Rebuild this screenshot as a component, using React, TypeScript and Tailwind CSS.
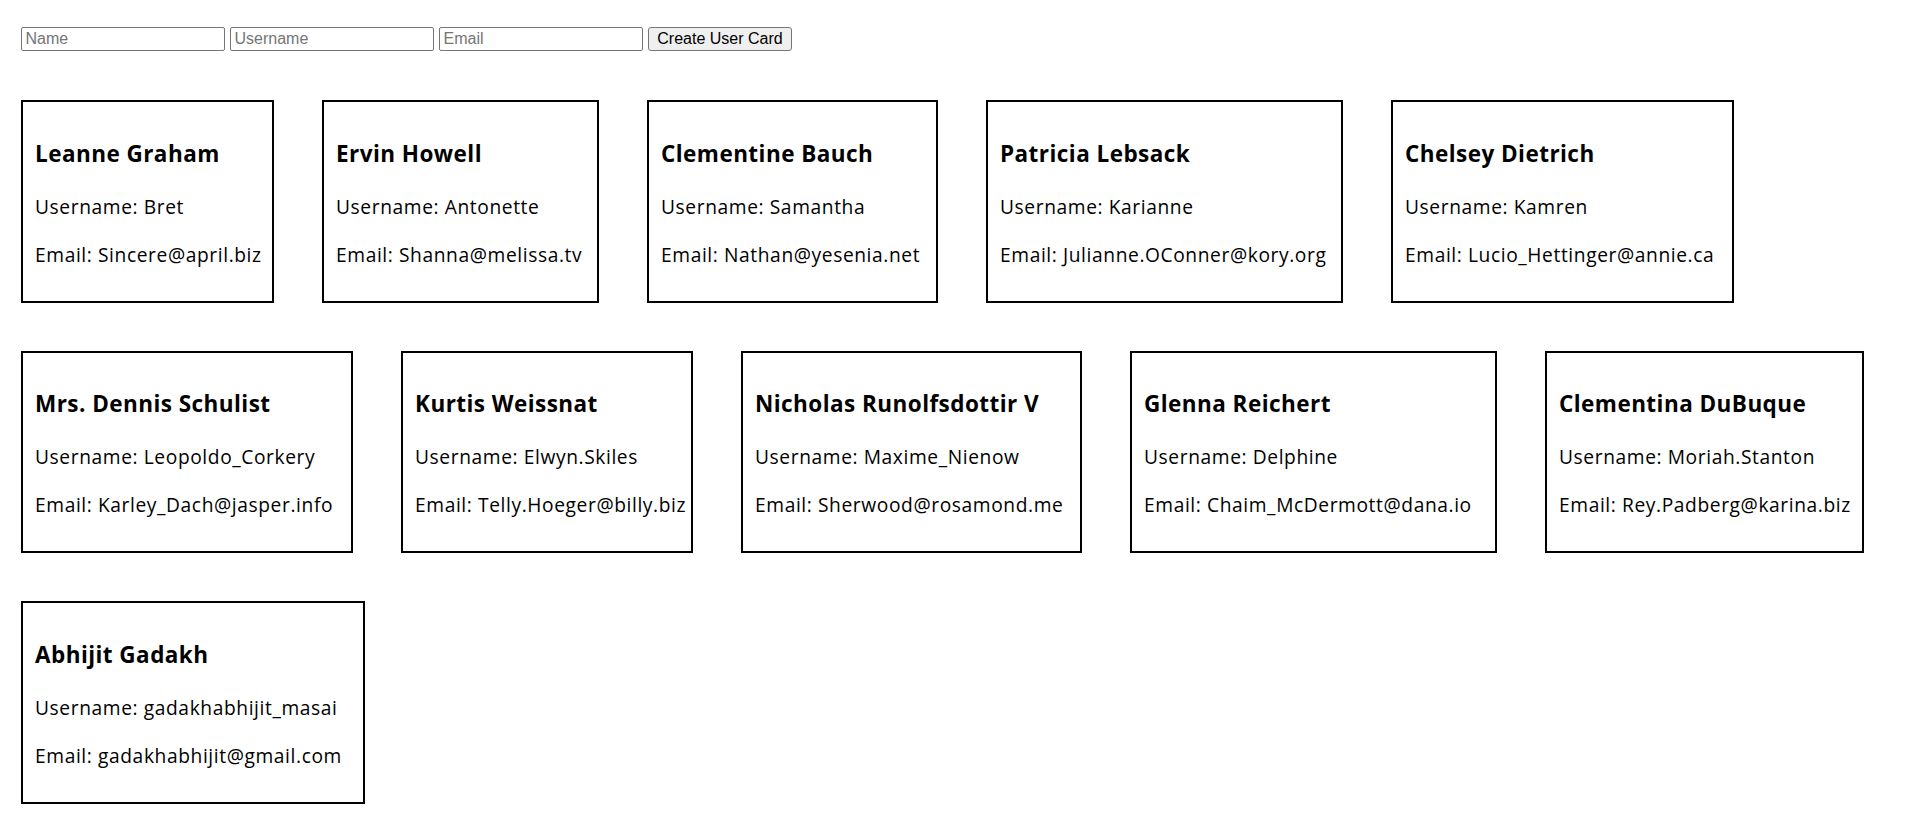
import { useState } from "react";

type User = {
  name: string;
  username: string;
  email: string;
  width: string;
};

const initialUsers: User[] = [
  { name: "Leanne Graham", username: "Bret", email: "Sincere@april.biz", width: "w-[253px]" },
  { name: "Ervin Howell", username: "Antonette", email: "Shanna@melissa.tv", width: "w-[277px]" },
  { name: "Clementine Bauch", username: "Samantha", email: "Nathan@yesenia.net", width: "w-[291px]" },
  { name: "Patricia Lebsack", username: "Karianne", email: "Julianne.OConner@kory.org", width: "w-[357px]" },
  { name: "Chelsey Dietrich", username: "Kamren", email: "Lucio_Hettinger@annie.ca", width: "w-[343px]" },
  { name: "Mrs. Dennis Schulist", username: "Leopoldo_Corkery", email: "Karley_Dach@jasper.info", width: "w-[332px]" },
  { name: "Kurtis Weissnat", username: "Elwyn.Skiles", email: "Telly.Hoeger@billy.biz", width: "w-[292px]" },
  { name: "Nicholas Runolfsdottir V", username: "Maxime_Nienow", email: "Sherwood@rosamond.me", width: "w-[341px]" },
  { name: "Glenna Reichert", username: "Delphine", email: "Chaim_McDermott@dana.io", width: "w-[367px]" },
  { name: "Clementina DuBuque", username: "Moriah.Stanton", email: "Rey.Padberg@karina.biz", width: "w-[319px]" },
  { name: "Abhijit Gadakh", username: "gadakhabhijit_masai", email: "gadakhabhijit@gmail.com", width: "w-[344px]" },
];

function UserCard({ user }: { user: User }) {
  return (
    <div className={`${user.width} shrink-0 border-2 border-black bg-white p-3 text-black whitespace-nowrap`}>
      <h3 className="my-[22.5px] text-[22.5px] leading-[33.7px] font-bold tracking-[0.45px]">
        {user.name}
      </h3>
      <p className="my-[19.2px] text-[19.2px] leading-[28.8px] tracking-[0.6px]">
        Username: {user.username}
      </p>
      <p className="my-[19.2px] text-[19.2px] leading-[28.8px] tracking-[0.6px]">
        Email: {user.email}
      </p>
    </div>
  );
}

export default function App() {
  const [users, setUsers] = useState<User[]>(initialUsers);
  const [name, setName] = useState("");
  const [username, setUsername] = useState("");
  const [email, setEmail] = useState("");

  const handleCreate = () => {
    if (!name || !username || !email) return;
    setUsers([...users, { name, username, email, width: "w-[344px]" }]);
    setName("");
    setUsername("");
    setEmail("");
  };

  const inputClass =
    "w-[204px] h-[24px] border border-[#767676] rounded-[2px] px-[3.5px] text-[16px] text-black bg-white placeholder:text-[#757575] outline-none";

  return (
    <div className="min-h-screen bg-white px-[21px] pt-[27px] pb-6 font-['Open_Sans',sans-serif]">
      <div className="flex items-center gap-[5px] font-['Liberation_Sans',Arial,sans-serif]">
        <input
          className={inputClass}
          placeholder="Name"
          value={name}
          onChange={(e) => setName(e.target.value)}
        />
        <input
          className={inputClass}
          placeholder="Username"
          value={username}
          onChange={(e) => setUsername(e.target.value)}
        />
        <input
          className={inputClass}
          placeholder="Email"
          value={email}
          onChange={(e) => setEmail(e.target.value)}
        />
        <button
          onClick={handleCreate}
          className="w-[144px] h-[24px] border border-[#767676] rounded-[3px] bg-[#efefef] text-[16px] text-black leading-none"
        >
          Create User Card
        </button>
      </div>

      <div className="mt-[49px] flex flex-wrap gap-[48px]">
        {users.map((user, i) => (
          <UserCard key={i} user={user} />
        ))}
      </div>
    </div>
  );
}
